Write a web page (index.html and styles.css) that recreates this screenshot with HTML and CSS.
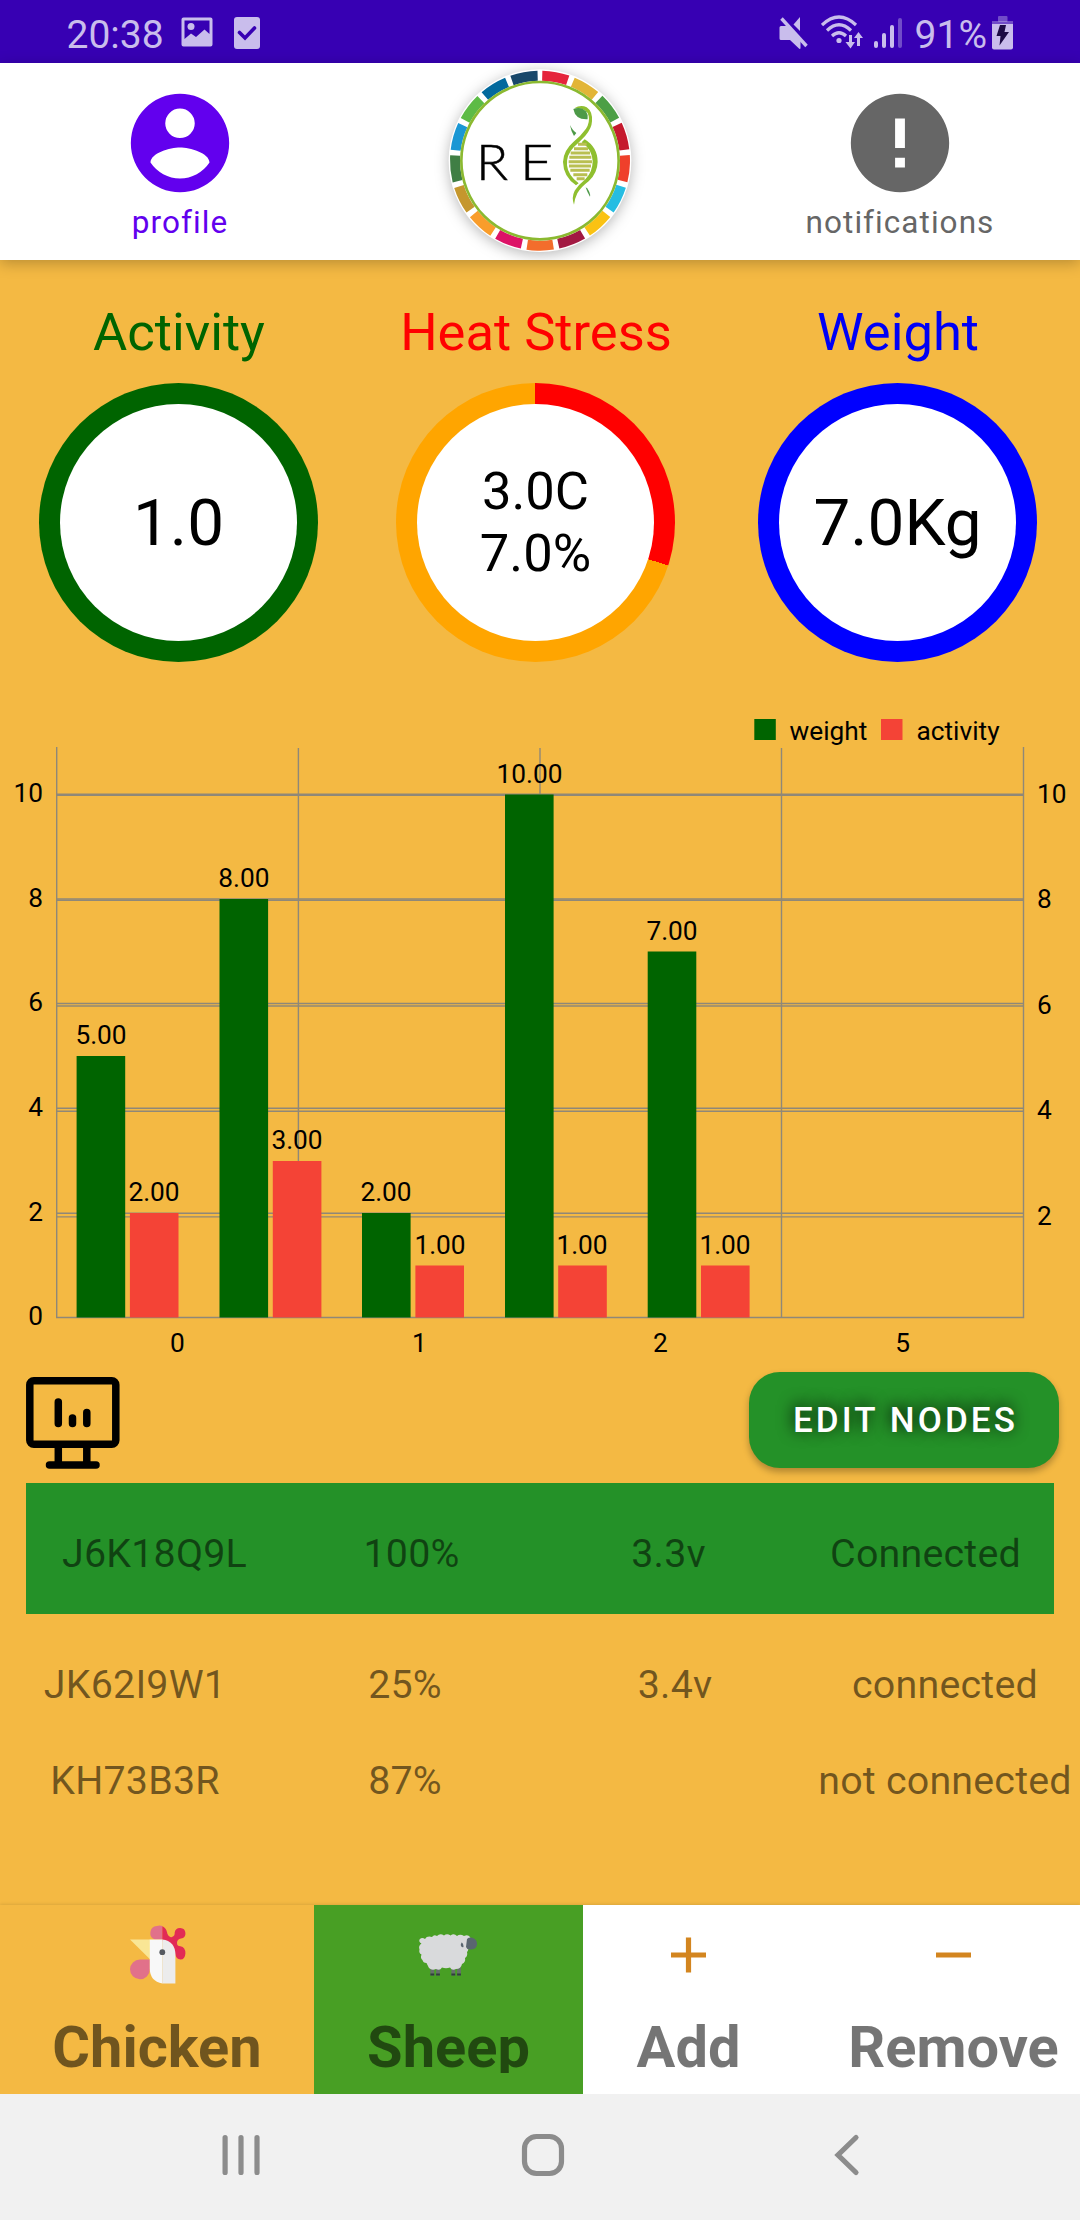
FILE: index.html
```html
<!DOCTYPE html>
<html lang="en">
<head>
<meta charset="utf-8">
<title>Livestock monitor</title>
<link rel="stylesheet" href="styles.css">
</head>
<body>
<div class="status">
  <span class="status-text">20:38</span>
  <svg class="st-image" width="32" height="30" viewBox="0 0 32 30"><path fill-rule="evenodd" d="M2.500.5h27a2 2 0 0 1 2 2v25a2 2 0 0 1-2 2h-27a2 2 0 0 1-2-2v-25a2 2 0 0 1 2-2zM3.500 3.500v18.500l6.500-5.500 5 3.500 8.500-7.500 5 4.500v-13.500z"/><circle cx="10" cy="9.500" r="3.500"/></svg>
  <svg class="st-check" width="26" height="32" viewBox="0 0 26 32"><rect width="26" height="32" rx="3"/><path d="M5.500 15.500l5.500 5.500 9.500-10" fill="none" stroke="#3700b3" stroke-width="3.600" stroke-linecap="round"/></svg>
  <div class="status-right">
    <svg width="30" height="32" viewBox="0 0 30 32"><path d="M2 9h6.500l13 12.500v10l-1 .5-9.500-9h-9q-1.500 0-1.500-1.500v-11q0-1.500 1.500-1.500z"/><path d="M14.500 7.500l6.500-7.500v14z"/><path d="M2.500 1.500l25 27.500" stroke="#c9bdec" stroke-width="3.400"/></svg>
    <svg class="st-wifi" width="43" height="34" viewBox="0 0 43 34"><g fill="none" stroke="#c9bdec" stroke-width="3.200"><path d="M1 10Q18-6 35 10M6 15.500Q18 4 30 15.500M11 21Q18 14.500 25 21"/></g><circle cx="18" cy="25.500" r="2.600"/><path d="M28 20h3v7h3l-4.500 6.500-5-6.500h3.500zM36 31v-8h-3l4.500-6 4.500 6h-3v8z"/></svg>
    <svg class="st-signal" width="28" height="30" viewBox="0 0 28 30"><rect y="23" width="4" height="7" rx="2"/><rect x="8" y="15" width="4" height="15" rx="2"/><rect x="16" y="7" width="4" height="23" rx="2"/><rect x="24" width="4" height="30" rx="2" opacity=".4"/></svg>
    <span class="status-text">91%</span>
    <svg class="st-battery" width="21" height="34" viewBox="0 0 21 34"><rect x="6" width="9.500" height="6" rx="1" opacity=".4"/><rect y="5" width="21" height="4" opacity=".4"/><path d="M0 8h21v23.500q0 2-2 2h-17q-2 0-2-2z"/><path fill="#1d0b45" d="M8 9h6l-1.500 7h4.500l-9.500 13.500 1-9.500h-4z"/></svg>
  </div>
</div>

<header class="header">
  <div class="header-item profile">
    <svg width="118" height="118" viewBox="0 0 24 24"><path fill-rule="evenodd" d="M12 2a10 10 0 1 0 0 20 10 10 0 0 0 0-20zm0 3a3 3 0 1 1 0 6 3 3 0 0 1 0-6zm0 14.200a7.200 7.200 0 0 1-6-3.220c.03-1.990 4-3.080 6-3.080 1.990 0 5.970 1.090 6 3.080a7.200 7.200 0 0 1-6 3.220z"/></svg>
    <span>profile</span>
  </div>
  <div class="logo">
    <svg width="220" height="197" viewBox="0 9 660 591">
      <circle class="logo-disc" cx="330" cy="302" r="274" fill="#fff"/>
      <g fill="none" stroke-width="30" transform="rotate(-88.500 330 302)">
        <circle class="seg" pathLength="17" cx="330" cy="302" r="255" stroke="#e5243b" stroke-dashoffset="0"/>
        <circle class="seg" pathLength="17" cx="330" cy="302" r="255" stroke="#e2b537" stroke-dashoffset="-1"/>
        <circle class="seg" pathLength="17" cx="330" cy="302" r="255" stroke="#4c9f45" stroke-dashoffset="-2"/>
        <circle class="seg" pathLength="17" cx="330" cy="302" r="255" stroke="#c5192d" stroke-dashoffset="-3"/>
        <circle class="seg" pathLength="17" cx="330" cy="302" r="255" stroke="#ef402b" stroke-dashoffset="-4"/>
        <circle class="seg" pathLength="17" cx="330" cy="302" r="255" stroke="#26bde2" stroke-dashoffset="-5"/>
        <circle class="seg" pathLength="17" cx="330" cy="302" r="255" stroke="#fac213" stroke-dashoffset="-6"/>
        <circle class="seg" pathLength="17" cx="330" cy="302" r="255" stroke="#a21942" stroke-dashoffset="-7"/>
        <circle class="seg" pathLength="17" cx="330" cy="302" r="255" stroke="#f36d2c" stroke-dashoffset="-8"/>
        <circle class="seg" pathLength="17" cx="330" cy="302" r="255" stroke="#dd1367" stroke-dashoffset="-9"/>
        <circle class="seg" pathLength="17" cx="330" cy="302" r="255" stroke="#f99d2b" stroke-dashoffset="-10"/>
        <circle class="seg" pathLength="17" cx="330" cy="302" r="255" stroke="#c5972d" stroke-dashoffset="-11"/>
        <circle class="seg" pathLength="17" cx="330" cy="302" r="255" stroke="#3f7e44" stroke-dashoffset="-12"/>
        <circle class="seg" pathLength="17" cx="330" cy="302" r="255" stroke="#1a97d4" stroke-dashoffset="-13"/>
        <circle class="seg" pathLength="17" cx="330" cy="302" r="255" stroke="#5dbb46" stroke-dashoffset="-14"/>
        <circle class="seg" pathLength="17" cx="330" cy="302" r="255" stroke="#02699d" stroke-dashoffset="-15"/>
        <circle class="seg" pathLength="17" cx="330" cy="302" r="255" stroke="#19486a" stroke-dashoffset="-16"/>
      </g>
      <circle cx="330" cy="302" r="236" fill="#fff" stroke="#8bb930" stroke-width="8"/>
      <text class="logo-text" transform="translate(138 360) scale(1.060 1)">R</text><text class="logo-text" transform="translate(269 360) scale(1.160 1)">E</text>
      <g fill="#8fbf2f">
        <path d="M433 145Q452 133 470 142Q488 154 486 184Q485 206 466 227Q448 246 431 262Q408 286 411 316Q414 346 446 370L438 376Q400 350 399 306Q400 272 430 246Q452 228 468 206Q480 188 476 168Q470 142 433 145z"/>
        <path d="M455 247L464 238Q503 262 503 306Q502 340 476 364Q452 382 442 400Q434 416 432 434Q424 412 434 392Q446 374 466 358Q488 336 488 304Q486 268 455 247z"/>
      </g>
      <g fill="#4d9a48"><path d="M430 147Q452 138 468 154Q475 164 473 178Q436 180 430 147z"/><path d="M420 195Q423 214 432 228L439 219Q428 212 420 195z"/><path d="M467 382Q472 398 480 410Q482 398 471 385z"/></g>
      <path d="M444 253h26M432 266h42M422 279h58M418 292h66M416 305h70M417 318h66M421 331h58M430 344h42M440 356h24" stroke="#b9bf52" stroke-width="9"/>
    </svg>
  </div>
  <div class="header-item notifications">
    <svg width="118" height="118" viewBox="0 0 24 24"><path fill-rule="evenodd" d="M12 2a10 10 0 1 0 0 20 10 10 0 0 0 0-20zm-1 5h2v6h-2zm0 8h2v2h-2z"/></svg>
    <span>notifications</span>
  </div>
</header>

<main class="main">
  <section class="gauges">
    <div class="gauge"><h2 class="activity">Activity</h2><div class="ring ring-activity"><div class="dial">1.0</div></div></div>
    <div class="gauge"><h2 class="heat">Heat Stress</h2><div class="ring ring-heat"><div class="dial dial-two"><span>3.0C</span><span>7.0%</span></div></div></div>
    <div class="gauge"><h2 class="weight">Weight</h2><div class="ring ring-weight"><div class="dial">7.0Kg</div></div></div>
  </section>

  <svg class="chart" width="1080" height="703" viewBox="0 662 1080 703">
    <g fill="none" stroke="#8f8878" stroke-width="1.400">
      <path d="M56.700 747V1317.500H1023.500V747M298.400 748V1317M540 748V1317M781.500 748V1317"/>
      <path d="M57 794.300H1023M57 899H1023M57 1003.500H1023M57 1108.300H1023M57 1213.200H1023"/>
      <path d="M57 795.400H1023M57 900.200H1023M57 1006H1023M57 1111.300H1023M57 1216.900H1023"/>
    </g>
    <g fill="#006400">
      <path d="M76.600 1056h48.600v261.500h-48.600zM219.500 899h48.600v418.500h-48.600zM362 1213h48.600v104.500h-48.600zM505 794.500h48.600v523h-48.600zM647.700 951.500h48.600v366h-48.600z"/>
      <path d="M754.300 719h21.500v21h-21.500z"/>
    </g>
    <g fill="#f44336">
      <path d="M129.900 1213h48.600v104.500h-48.600zM272.800 1161h48.600v156.500h-48.600zM415.400 1265.500h48.600v52h-48.600zM558.200 1265.500h48.600v52h-48.600zM701 1265.500h48.600v52h-48.600z"/>
      <path d="M881 719h21.500v21h-21.500z"/>
    </g>
    <g class="chart-text mid">
      <text x="101" y="1043.500">5.00</text><text x="154" y="1200.500">2.00</text>
      <text x="243.800" y="886.500">8.00</text><text x="297" y="1148.500">3.00</text>
      <text x="386" y="1200.500">2.00</text><text x="440" y="1253.500">1.00</text>
      <text x="529.500" y="782.500">10.00</text><text x="582" y="1253.500">1.00</text>
      <text x="672" y="939.500">7.00</text><text x="725" y="1253.500">1.00</text>
      <text x="177.300" y="1351.500">0</text><text x="419.500" y="1351.500">1</text><text x="660.500" y="1351.500">2</text><text x="902.600" y="1351.500">5</text>
    </g>
    <g class="chart-text end">
      <text x="43" y="802">10</text><text x="43" y="906.500">8</text><text x="43" y="1011">6</text><text x="43" y="1115.800">4</text><text x="43" y="1220.500">2</text><text x="43" y="1324.500">0</text>
    </g>
    <g class="chart-text">
      <text x="1037" y="803">10</text><text x="1037" y="907.800">8</text><text x="1037" y="1013.700">6</text><text x="1037" y="1118.800">4</text><text x="1037" y="1224.800">2</text>
      <text x="789.500" y="740">weight</text><text x="916.500" y="740">activity</text>
    </g>
  </svg>

  <div class="toolbar">
    <svg class="monitor" width="94" height="93" viewBox="0 0 94 93" fill="none" stroke="#000" stroke-width="7.500"><rect x="3.800" y="3.800" width="86" height="63.500" rx="4"/><path d="M32.300 68v18M60.800 68v18"/><path stroke-linecap="round" d="M23.500 88h46.500M32.300 25v21.500M46.500 41v5.500M60.800 35.500v11"/></svg>
    <button class="edit">EDIT NODES</button>
  </div>

  <div class="nodes">
    <div class="node selected"><span>J6K18Q9L</span><span>100%</span><span>3.3v</span><span>Connected</span></div>
    <div class="node"><span>JK62I9W1</span><span>25%</span><span>3.4v</span><span>connected</span></div>
    <div class="node"><span>KH73B3R</span><span>87%</span><span></span><span>not connected</span></div>
  </div>
</main>

<nav class="tabs">
  <div class="tab tab-chicken">
    <svg width="63" height="63" viewBox="0 0 63 63">
      <path fill="#e1718a" d="M36.300 3v13.500h-7.500a7 7 0 0 1 2-13.500q3-1.200 5.500 0zM23.800 36.500v10a9.900 9.900 0 1 1-9.900-10z"/>
      <path fill="#e22b55" d="M36.300 3.200C40.500 5 41 9 41.500 11Q43 15 46 14Q49 13 48.700 9.500A5.400 5.400 0 1 1 55 15.600Q51 16.500 51 20Q51 23.300 54.500 23.300Q59.400 24 59.400 30.500Q59 36.500 54.500 36.500Q50 36.500 49 30L36.300 18z"/>
      <path fill="#f9e695" d="M4 16.500h20v19.800z"/>
      <path fill="#f8f8f8" d="M23.800 16.500h12.600v44Q24 58 23.800 46z"/>
      <path fill="#ececec" d="M36.300 16.500Q49.400 18 49.400 32v28.500h-13.100z"/>
      <circle cx="36.300" cy="29.200" r="2.900" fill="#55595f"/>
    </svg>
    <span>Chicken</span>
  </div>
  <div class="tab tab-sheep">
    <svg width="63" height="63" viewBox="0 0 63 63">
      <path d="M15.300 44v8.400M21 44v8.400M36.300 44v8.400M42 44v8.400" stroke="#65706b" stroke-width="3.800"/>
      <path d="M13.400 51.500h3.800M19.100 51.500h3.800M34.400 51.500h3.800M40.100 51.500h3.800" stroke="#30403a" stroke-width="2"/>
      <path fill="#d9dadc" d="M8 16Q5 14 2.500 16.500Q1.500 19 4.500 20.500Q1 23 2.500 26.500Q1.500 30 4.500 31.500Q3 35 5.500 37Q6 40 9.500 40L12 45Q15 48 19 46Q23 48 25 44.500Q29 46 33 44.500Q35 48 39 46Q44 46 45 41Q49 39 48 35Q51 33 50 29Q52 27 51 23V19Q55 17 53 14Q51 11 47 13Q43 10.500 40 13Q37 10 33.500 12.500Q30 10 27 12.500Q23 10 20 13Q17 11 15 14Q10 12.500 8 16z"/>
      <path fill="#5a6670" d="M50 16Q53 13.500 57 15.500Q60 17 60 21Q60 26 54 26.500Q50 27 49 24z"/>
      <path fill="#5a6670" d="M44.500 19.500Q46.500 20 46.500 24Q44.500 25 43.700 22zM50 18l3-1v2z"/>
    </svg>
    <span>Sheep</span>
  </div>
  <div class="tab tab-add">
    <svg width="63" height="63" viewBox="0 0 63 63"><path d="M14 32h35M31.500 14.500v35" stroke="#d3851f" stroke-width="5.200"/></svg>
    <span>Add</span>
  </div>
  <div class="tab tab-remove">
    <svg width="63" height="63" viewBox="0 0 63 63"><path d="M14 32h35" stroke="#d3851f" stroke-width="5.200"/></svg>
    <span>Remove</span>
  </div>
</nav>

<div class="sysnav">
  <svg width="42" height="46" viewBox="0 0 42 46"><path d="M5.100 5.500v35M21 5.500v35M37 5.500v35"/></svg>
  <svg width="46" height="46" viewBox="0 0 46 46"><rect x="4.500" y="4.500" width="37" height="37" rx="12"/></svg>
  <svg width="34" height="46" viewBox="0 0 34 46"><path d="M26 5.500l-18 17.500 18 17.500"/></svg>
</div>
</body>
</html>
```
FILE: styles.css
```css
* { box-sizing: border-box; }
body {
  margin: 0;
  width: 1080px;
  height: 2220px;
  overflow: hidden;
  display: flex;
  flex-direction: column;
  background: #f4b943;
  font-family: Roboto, "Liberation Sans", sans-serif;
}
svg { display: block; flex: none; }

.status {
  height: 63px;
  flex: none;
  display: flex;
  align-items: flex-start;
  padding: 0 67px 0 66.5px;
  background: #3700b3;
  color: #c9bdec;
  fill: #c9bdec;
}
.status-text { font-size: 39px; line-height: 46px; padding-top: 12px; }
.st-image { margin: 17px 0 0 17.5px; }
.st-check { margin: 17px 0 0 21px; }
.status-right { margin-left: auto; display: flex; align-items: flex-start; }
.status-right svg { margin-top: 17px; }
.status-right .st-wifi { margin: 15px 0 0 12px; }
.status-right .st-signal { margin: 18px 13px 0 10px; }
.status-right .st-battery { margin: 16px 0 0 5px; }

.header {
  position: relative;
  height: 197px;
  flex: none;
  display: grid;
  grid-template-columns: 360px 360px 360px;
  background: #fff;
  box-shadow: 0 3px 14px rgba(0, 0, 0, .25);
}
.header-item {
  display: flex;
  flex-direction: column;
  align-items: center;
  gap: 2px;
  padding-top: 21px;
  font-size: 31.5px;
  line-height: 38px;
  letter-spacing: 1.05px;
}
.profile { color: #6200ee; fill: #6200ee; }
.notifications { color: #666; fill: #666; }
.logo { display: flex; justify-content: center; }
.logo-disc { filter: drop-shadow(0 8px 20px rgba(0, 0, 0, .28)); }
.seg { stroke-dasharray: .83 16.17; }
.logo-text { font: 300 150px Lato, sans-serif; fill: #000; stroke: #000; stroke-width: 1.500px; }

.main { flex: 1; display: flex; flex-direction: column; min-height: 0; padding-top: 41px; }
.gauges { display: grid; grid-template-columns: 356px 358px 366px; }
.gauge { display: flex; flex-direction: column; align-items: center; gap: 20px; }
.gauge h2 { margin: 0; padding-left: 2px; font-size: 52.5px; font-weight: 400; line-height: 62px; }
.activity { color: #006400; }
.heat { color: #f00; }
.weight { color: #0000f5; }
.ring { width: 279px; height: 279px; padding: 21px; border-radius: 50%; }
.ring-activity { background: #006400; }
.ring-heat { background: conic-gradient(#f00 0 108deg, #ffa500 108deg); }
.ring-weight { background: #00f; }
.dial {
  height: 237px;
  padding-left: 1px;
  border-radius: 50%;
  background: #fff;
  display: flex;
  flex-direction: column;
  align-items: center;
  justify-content: center;
  font-size: 65.600px;
  line-height: 77px;
}
.dial-two { font-size: 52.5px; line-height: 61.5px; }

.chart-text { font-size: 26.250px; fill: #000; }
.mid { text-anchor: middle; }
.end { text-anchor: end; }

.toolbar {
  height: 118px;
  flex: none;
  display: flex;
  justify-content: space-between;
  align-items: flex-start;
  padding: 7px 21px 0 25.5px;
}
.monitor { margin-top: 4.500px; }
.edit {
  width: 310px;
  height: 96px;
  padding: 2px 0 0 3px;
  border: 0;
  border-radius: 31px;
  background: #249128;
  color: #fff;
  font: 500 35px/42px Roboto, sans-serif;
  letter-spacing: 3.100px;
  text-shadow: -1px -2px 16px #000;
  box-shadow: 0 4px 7px rgba(0, 0, 0, .28);
}

.node {
  height: 96px;
  display: grid;
  grid-template-columns: repeat(4, 1fr);
  align-items: start;
  justify-items: center;
  padding-top: 48px;
  font-size: 39.400px;
  line-height: 46px;
  letter-spacing: .200px;
  color: rgba(0, 0, 0, .54);
  white-space: nowrap;
}
.selected { height: 131px; margin: 0 26px; background: #249128; }

.tabs {
  height: 189px;
  flex: none;
  display: grid;
  grid-template-columns: 314px 269px 211px 319px;
  overflow: hidden;
  background: #fff;
  box-shadow: 0 -1px 3px rgba(0, 0, 0, .1);
}
.tab {
  display: flex;
  flex-direction: column;
  align-items: center;
  gap: 27px;
  padding-top: 18px;
  font-size: 57.750px;
  font-weight: 700;
  line-height: 68px;
  color: rgba(0, 0, 0, .54);
}
.tab-chicken { background: #f4b943; }
.tab-sheep { background: #489f24; }
.tab-sheep span { height: 60px; overflow: hidden; }

.sysnav {
  height: 126px;
  flex: none;
  display: flex;
  align-items: flex-start;
  padding: 38px 0 0 220px;
  background: #f1f1f1;
  fill: none;
  stroke: #8c8c8c;
  stroke-width: 5.200;
  stroke-linecap: round;
}
.sysnav svg + svg { margin-left: 258px; }
.sysnav svg:last-child { margin-left: 264px; }
```
